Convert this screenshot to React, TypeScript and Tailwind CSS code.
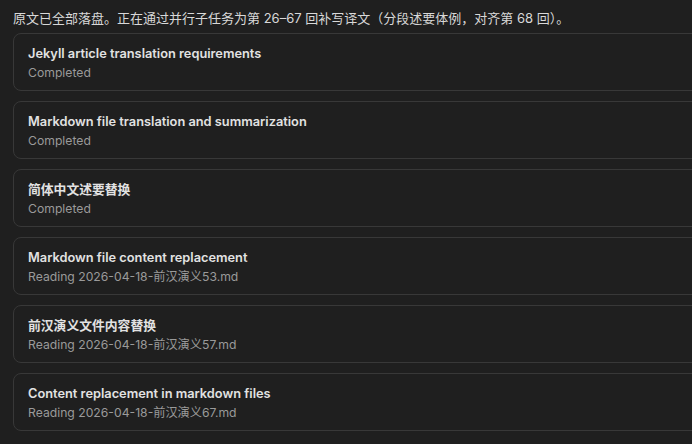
const tasks = [
  { title: "Jekyll article translation requirements", status: "Completed" },
  { title: "Markdown file translation and summarization", status: "Completed" },
  { title: "简体中文述要替换", status: "Completed" },
  { title: "Markdown file content replacement", status: "Reading 2026-04-18-前汉演义53.md" },
  { title: "前汉演义文件内容替换", status: "Reading 2026-04-18-前汉演义57.md" },
  { title: "Content replacement in markdown files", status: "Reading 2026-04-18-前汉演义67.md" },
];

const font = { fontFamily: '"Inter", "Noto Sans CJK SC", sans-serif' };

const TaskCard = ({ title, status }: { title: string; status: string }) => (
  <div className="rounded-lg border border-[#383838] bg-[#1f1f1f] px-[14px] pt-[11px] pb-[8px]">
    <div className="text-[12.8px] leading-[18px] font-semibold text-[#e2e2e2]">{title}</div>
    <div className="text-[12.2px] leading-[19px] text-[#9a9a9a]">{status}</div>
  </div>
);

const App = () => {
  return (
    <div className="min-h-screen w-[692px] h-[444px] overflow-hidden bg-[#1f1f1f]" style={font}>
      <div className="pl-[13px] pt-2">
        <p className="text-[13px] leading-[20px] text-[#d8d8d8] mb-[5px] whitespace-nowrap">
          原文已全部落盘。正在通过并行子任务为第 26–67 回补写译文（分段述要体例，对齐第 68 回）。
        </p>
        <div className="w-[740px] flex flex-col gap-[10px]">
          {tasks.map((t) => (
            <TaskCard key={t.title} title={t.title} status={t.status} />
          ))}
        </div>
      </div>
    </div>
  );
};

export default App;
